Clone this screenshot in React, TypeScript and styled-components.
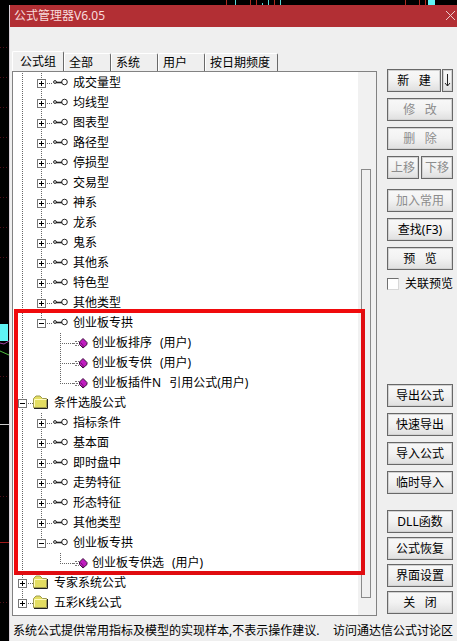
import React from "react";
import styled, { createGlobalStyle } from "styled-components";

const GlobalStyle = createGlobalStyle`
  * { box-sizing: border-box; }
  body {
    margin: 0;
    background: #000;
    color: #000;
    font: 12px/20px "Noto Sans", "Noto Sans CJK SC", sans-serif;
  }
  button, input { font: inherit; margin: 0; }
`;

const Desktop = styled.div`
  position: relative;
  min-height: 100vh;
  padding: 5px 0 0 9px;
  overflow: hidden;
`;

const Chart = styled.svg`
  position: absolute;
  inset: 0;
`;

const Dialog = styled.main`
  position: relative;
  min-height: calc(100vh - 5px);
  background: #efefef;
  border-left: 1px solid #d8d0d8;
`;

const TitleBar = styled.header`
  display: flex;
  align-items: center;
  justify-content: space-between;
  height: 22px;
  padding: 0 0 0 4px;
  background: #b22f34;
  color: #f8dcdc;
`;

const Title = styled.h1`
  margin: 0;
  font-size: 12px;
  font-weight: 400;
`;

const CloseButton = styled.button`
  display: flex;
  padding: 0 1px 0 4px;
  border: 0;
  background: none;
  color: #eccccc;
`;

const Body = styled.div`
  display: flex;
  gap: 10px;
  padding: 24px 4px 0 2px;
`;

const Main = styled.section`
  flex: 1;
  min-width: 0;
`;

const Tabs = styled.div`
  display: flex;
  align-items: flex-end;
  height: 20px;
`;

const Tab = styled.button<{ $active?: boolean }>`
  height: ${(p) => (p.$active ? 20 : 18)}px;
  padding: ${(p) => (p.$active ? "0 7px" : "0 17px 0 4px")};
  border: 0;
  border-top: 1px solid #fff;
  border-left: 1px solid #fff;
  border-right: 1px solid #696969;
  border-radius: 2px 2px 0 0;
  background: #efefef;
  line-height: 18px;
  color: #000;
  white-space: nowrap;

  &:last-child { padding-right: 7px; }
`;

const Panel = styled.div`
  position: relative;
  display: flex;
  border: 1px solid #828282;
  background: #fff;
`;

const Tree = styled.ul`
  flex: 1;
  min-width: 0;
  margin: 0;
  padding: 1px 0 2px;
  list-style: none;
`;

const Row = styled.li`
  display: flex;
  align-items: center;
  height: 20px;
  white-space: nowrap;
`;

const Guides = styled.svg`
  flex: none;
`;

const Owner = styled.span`
  margin-left: 8px;
`;

const ScrollTrack = styled.div`
  display: flex;
  flex-direction: column;
  width: 18px;
  padding: 97px 5px 17px 3px;
  background: #f1f1f1;
`;

const ScrollThumb = styled.div`
  flex: 1;
  border: 1px solid #8a8a8a;
  background: #f0f0f0;
`;

const Highlight = styled.div`
  position: absolute;
  top: 237px;
  bottom: 40px;
  left: 1px;
  right: 11px;
  border: 4px solid #f00a0c;
  border-right-color: #e00c10;
  border-bottom-color: #e00c10;
  pointer-events: none;
`;

const Side = styled.aside`
  display: flex;
  flex-direction: column;
  justify-content: space-between;
  width: 66px;
  padding: 18px 0 2px;
`;

const Stack = styled.div<{ $gap?: number }>`
  display: flex;
  flex-direction: column;
  gap: ${(p) => p.$gap ?? 6}px;
`;

const Upper = styled(Stack)`
  gap: 10px;
`;

const Lower = styled(Stack)`
  gap: 16px;
`;

const Pair = styled.div<{ $gap: number }>`
  display: flex;
  gap: ${(p) => p.$gap}px;
`;

const Button = styled.button<{ $width?: number }>`
  display: flex;
  align-items: center;
  justify-content: center;
  flex: ${(p) => (p.$width ? `0 0 ${p.$width}px` : "1 0 auto")};
  height: 23px;
  padding: 0;
  border: 1px solid #686868;
  box-shadow: inset 0 0 0 1px #d2d2d2;
  background: linear-gradient(#f8f8f8 0%, #f2f2f2 50%, #dfdfdf 100%);
  color: #000;
  white-space: pre;

  &:disabled { color: #8c8c8c; }
`;

const Check = styled.label`
  display: flex;
  align-items: center;
  gap: 6px;
  height: 12px;
  margin-top: -2px;
  white-space: nowrap;
`;

const Box = styled.input`
  appearance: none;
  flex: none;
  width: 12px;
  height: 12px;
  border: 1px solid #707070;
  border-right-color: #d8d8d8;
  border-bottom-color: #d8d8d8;
  background: #fff;
`;

const Footer = styled.footer`
  display: flex;
  justify-content: space-between;
  padding: 5px 4px 0 3px;
  white-space: nowrap;
`;

type Item = {
  level: 0 | 1 | 2;
  name: string;
  owner?: string;
  open?: boolean;
  last?: boolean;
};

const group = (name: string): Item => ({ level: 1, name });

const items: Item[] = [
  ...["成交量型", "均线型", "图表型", "路径型", "停损型", "交易型", "神系", "龙系", "鬼系", "其他系", "特色型", "其他类型"].map(group),
  { level: 1, name: "创业板专拱", open: true, last: true },
  { level: 2, name: "创业板排序", owner: "(用户)" },
  { level: 2, name: "创业板专供", owner: "(用户)" },
  { level: 2, name: "创业板插件N", owner: "引用公式(用户)", last: true },
  { level: 0, name: "条件选股公式", open: true },
  ...["指标条件", "基本面", "即时盘中", "走势特征", "形态特征", "其他类型"].map(group),
  { level: 1, name: "创业板专拱", open: true, last: true },
  { level: 2, name: "创业板专供选", owner: "(用户)", last: true },
  { level: 0, name: "专家系统公式" },
  { level: 0, name: "五彩K线公式", last: true },
];

function NodeArt({ level, open, last }: Item) {
  const width = [41, 60, 79][level];
  const x = [9.5, 28.5, 47.5][level];
  const end = [20, 40, 61][level];
  return (
    <Guides width={width} height="20" aria-hidden="true">
      <g stroke="#666" strokeDasharray="1 1" fill="none">
        {level > 0 && <path d="M9.5 0V20" />}
        <path d={`M${x} 0V${last ? 10 : 20}M${x - 0.5} 10.5H${end}`} />
      </g>
      {level < 2 && (
        <g stroke="#000" fill="none">
          <rect x={x - 4} y="6.5" width="8" height="8" fill="#fff" stroke="#777" />
          <path d={`M${x - 2.5} 10.5h5${open ? "" : `M${x} 8v5`}`} />
        </g>
      )}
      {level === 0 && (
        <g>
          <path d="M20.5 14.5V5.5L23 3h4l2.5 2.5h4v9z" fill="#e4de62" stroke="#a09c50" />
          <path d="M21.5 13.5V6.5h12" stroke="#fffcc0" fill="none" />
          <path d="M21 15.5h13.5V6" stroke="#222" fill="none" />
        </g>
      )}
      {level === 1 && (
        <g fill="none" stroke="#222">
          <circle cx="42" cy="9" r="1.4" />
          <path d="M43 9.5H49" strokeWidth="1.6" />
          <circle cx="51.5" cy="9" r="2.8" />
        </g>
      )}
      {level === 2 && (
        <g>
          <path d="M62 8.5h4M60 10.5h5M62 12.5h4" stroke="#777" strokeDasharray="2 1" />
          <path d="M70 5.5L74 9.5V11.5L70 15L66.5 11.5V9z" fill="#c01cc0" stroke="#401040" />
          <path d="M67.5 9.5L70 12.5V14" stroke="#701070" fill="none" />
        </g>
      )}
    </Guides>
  );
}

export default function App() {
  return (
    <>
      <GlobalStyle />
      <Desktop>
        <Chart width="457" height="641" aria-hidden="true">
          <path d="M226.5 0v5M250.5 0v5M256.5 0v5M274.5 0v5M405.5 0v5M419.5 0v5M425.5 0v5" stroke="#b02c20" />
          <path d="M235.5 0v5M262.5 3v2M268.5 0v5M280.5 0v5" stroke="#58d8d8" />
          <path d="M428 0h7v5h-7zM0 324h8v17H0z" fill="#5ff4f4" />
          <path d="M0 343l4 1 5-3" stroke="#a040a0" fill="none" />
          <path d="M0 351l9 4" stroke="#50c040" />
          <path d="M0 47.5h9M0 77.5h9M0 107.5h9M0 137.5h9M0 167.5h9M0 197.5h9M0 227.5h9M0 257.5h9M0 376.5h9M0 496.5h9M0 602.5h9" stroke="#501018" strokeDasharray="1 2" />
          <path d="M0 424.5h9" stroke="#ccc" />
          <path d="M0 542.5h9" stroke="#a01818" />
        </Chart>
        <Dialog>
          <TitleBar>
            <Title>公式管理器V6.05</Title>
            <CloseButton aria-label="关闭窗口">
              <svg width="11" height="12" aria-hidden="true">
                <path d="M1 1l9 9M10 1l-9 9" stroke="currentColor" />
              </svg>
            </CloseButton>
          </TitleBar>
          <Body>
            <Main>
              <Tabs role="tablist">
                {["公式组", "全部", "系统", "用户", "按日期频度"].map((label, i) => (
                  <Tab key={label} role="tab" aria-selected={i === 0} $active={i === 0}>
                    {label}
                  </Tab>
                ))}
              </Tabs>
              <Panel>
                <Tree>
                  {items.map((item, i) => (
                    <Row key={i}>
                      <NodeArt {...item} />
                      <span>{item.name}</span>
                      {item.owner && <Owner>{item.owner}</Owner>}
                    </Row>
                  ))}
                </Tree>
                <ScrollTrack>
                  <ScrollThumb />
                </ScrollTrack>
                <Highlight />
              </Panel>
            </Main>
            <Side>
              <Upper>
                <Stack>
                  <Pair $gap={1}>
                    <Button $width={54}>{"新\u00a0\u00a0\u00a0建"}</Button>
                    <Button aria-label="更多新建选项">
                      <svg width="7" height="13" aria-hidden="true">
                        <path d="M3.5 0v12M1 9l2.5 3L6 9" stroke="#222" fill="none" />
                      </svg>
                    </Button>
                  </Pair>
                  <Button disabled>{"修\u00a0\u00a0\u00a0改"}</Button>
                  <Button disabled>{"删\u00a0\u00a0\u00a0除"}</Button>
                  <Pair $gap={2}>
                    <Button $width={32} disabled>上移</Button>
                    <Button $width={32} disabled>下移</Button>
                  </Pair>
                </Stack>
                <Stack>
                  <Button disabled>加入常用</Button>
                  <Button>查找(F3)</Button>
                  <Button>{"预\u00a0\u00a0\u00a0览"}</Button>
                </Stack>
                <Check>
                  <Box type="checkbox" />
                  关联预览
                </Check>
              </Upper>
              <Lower>
                <Stack>
                  {["导出公式", "快速导出", "导入公式", "临时导入"].map((label) => (
                    <Button key={label}>{label}</Button>
                  ))}
                </Stack>
                <Stack $gap={4}>
                  {["DLL函数", "公式恢复", "界面设置", "关\u00a0\u00a0\u00a0闭"].map((label) => (
                    <Button key={label}>{label}</Button>
                  ))}
                </Stack>
              </Lower>
            </Side>
          </Body>
          <Footer>
            <span>系统公式提供常用指标及模型的实现样本,不表示操作建议.</span>
            <span>访问通达信公式讨论区</span>
          </Footer>
        </Dialog>
      </Desktop>
    </>
  );
}
